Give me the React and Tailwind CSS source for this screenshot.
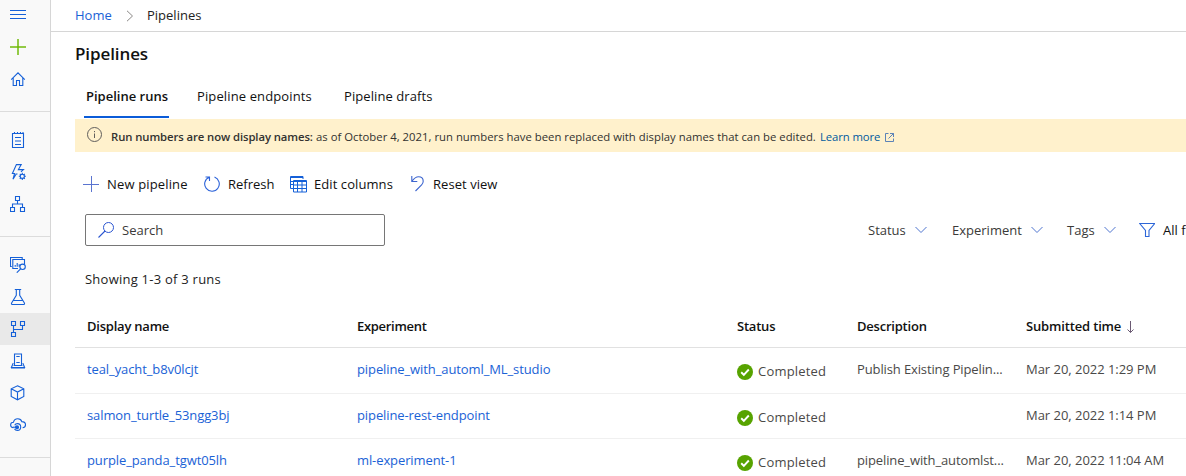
import React from "react";

function Icon({ children, size = 16, className = "" }) {
  return (
    <svg
      width={size}
      height={size}
      viewBox={`0 0 ${size} ${size}`}
      fill="none"
      stroke="currentColor"
      strokeWidth="1.1"
      className={`shrink-0 ${className}`}
    >
      {children}
    </svg>
  );
}

const icons = {
  menu: <path d="M0 4.5h16M0 8.5h16M0 12.5h16" />,
  add: (
    <g stroke="#6bb700" strokeOpacity="0.72" strokeWidth="2">
      <path d="M0 8h16" />
      <path d="M8 0v16" />
    </g>
  ),
  home: <path d="M1.2 8.6 8 1.8l6.8 6.8M3.2 7v7.5h3.3v-5h3v5h3.3V7" />,
  notebook: <path d="M2.5 1.5h11v14h-11zM4.5 0v2M7.5 0v2M10.5 0v2M13 0v2M5 5.5h6M5 9h6M5 12.5h6" />,
  automl: (
    <>
      <path d="M7.5 10H6.2L3 15.2 4.6 9.5H2.4L6.4.6h4.8L8.4 5.6h5L11 7.8" />
      <circle cx="12.3" cy="12.3" r="2.1" />
      <path d="M12.3 8.8v1.4M12.3 14.4v1.5M8.8 12.3h1.4M14.4 12.3h1.5M9.8 9.8l1 1M13.8 13.8l1 1M9.8 14.8l1-1M13.8 10.8l1-1" />
    </>
  ),
  designer: <path d="M5.5.5h4v4h-4zM.5 11.5h4v4h-4zM10.5 11.5h4v4h-4zM7.5 4.5v3.5M2.5 11.5V8h10v3.5" />,
  datasets: (
    <>
      <path d="M1.8 9.5H.5v-9h11.7v1.8M8 11.5H2.8v-9h11.7V7" />
      <path d="M5.2 9.7V8M7.2 9.7V6M9.2 9.7V7.2" />
      <circle cx="12.6" cy="9.8" r="2.7" />
      <path d="m10.6 11.8-3.8 3.9" />
    </>
  ),
  flask: <path d="M4.8.5h6.4M6.3.5v5.8L1.6 14c-.4.8 0 1.5.8 1.5h11.2c.8 0 1.2-.7.8-1.5L9.7 6.3V.5M3.5 11.5h9" />,
  pipelines: <path d="M1.5.5h4v4h-4zM10.5.5h4v4h-4zM1.5 11.5h4v4h-4zM3.5 4.5v7M3.5 8.5h9v-4" />,
  models: <path d="M4.5 12V1h7v11M6.3 3.5h3.4M6.3 9.5h3.4M3.5 10.5H3l-1.6 4h13.2l-1.6-4h-.5M1 15h14M3.6 12.5h8.8" />,
  endpoints: <path d="m7.5.8 6.3 3v7.7l-6.3 3.3-6.3-3.3V3.8zM1.2 3.8l6.3 3.3 6.3-3.3M7.5 7.1v7.7" />,
  compute: (
    <>
      <path d="M3.5 10.8C1.7 10.6.6 9.4.6 8c0-1.700 1.300-2.800 2.900-2.800C3.900 3.100 5.600 1.700 7.800 1.700c2 0 3.500 1.200 4 2.900 2.300 0 3.700 1.300 3.700 3.100 0 1.600-1.200 2.900-2.900 3" />
      <path d="M4.700 8.300C5.300 7 6.200 6.600 7.400 6.600c2 0 3.300 1.400 3.300 3.300 0 2-1.500 3.500-3.400 3.500-1.200 0-2.200-.5-2.800-1.500" />
      <circle cx="7" cy="10.200" r="1.500" fill="currentColor" />
      <path d="M3 10.200h4" />
    </>
  ),
};

function NavItem({ name, selected }) {
  return (
    <div className={`flex h-8 items-center pl-[10px] ${selected ? "bg-[#e9e9e9]" : ""}`}>
      <Icon>{icons[name]}</Icon>
    </div>
  );
}

function Sidebar() {
  return (
    <nav className="flex w-[51px] shrink-0 flex-col border-r border-[#d6d6d6] bg-[#f9f9f9] text-[#1560d8]">
      <div className="border-b border-[#dcdcdc] pb-4">
        <div className="mb-[3px] flex h-7 items-center pl-[10px]">
          <Icon>{icons.menu}</Icon>
        </div>
        <NavItem name="add" />
        <NavItem name="home" />
      </div>
      <div className="border-b border-[#dcdcdc] pt-3 pb-4">
        <NavItem name="notebook" />
        <NavItem name="automl" />
        <NavItem name="designer" />
      </div>
      <div className="border-b border-[#dcdcdc] pt-3 pb-4">
        <NavItem name="datasets" />
        <NavItem name="flask" />
        <NavItem name="pipelines" selected />
        <NavItem name="models" />
        <NavItem name="endpoints" />
        <NavItem name="compute" />
      </div>
    </nav>
  );
}

function Chevron() {
  return (
    <svg width="12" height="8" viewBox="0 0 12 8" fill="none" stroke="#4f74cf" strokeWidth="1" className="shrink-0">
      <path d="m.5 1 5.500 5.500L11.500 1" />
    </svg>
  );
}

function Banner() {
  return (
    <div className="ml-6 flex h-[33px] shrink-0 items-center bg-[#fff1cc] pl-3 text-[11.3px] text-[#323130]">
      <Icon className="-mt-[2px] mr-[8px] text-[#605e5c]">
        <circle cx="7.500" cy="7.500" r="7" strokeWidth="1" />
        <path d="M7.500 6.500v4.500M7.500 4v1.200" strokeWidth="1" />
      </Icon>
      <span className="w-[205px] pt-[3px] font-semibold tracking-[-0.08px]">Run numbers are now display names:</span>
      <span className="w-[504px] pt-[3px] tracking-[0.02px]">
        as of October 4, 2021, run numbers have been replaced with display names that can be edited.
      </span>
      <span className="w-[65px] pt-[3px] tracking-[-0.1px] text-[#005a9e]">Learn more</span>
      <svg width="9" height="9" viewBox="0 0 9 9" fill="none" stroke="#4a76b4" className="mt-[3px] shrink-0">
        <path d="M3.500.5h-3v8h8v-3M5 .5h3.500V4M8.500.5l-5 5" strokeWidth=".9" />
      </svg>
    </div>
  );
}

function Toolbar() {
  return (
    <div className="mt-4 flex h-8 shrink-0 items-center pl-8 text-[13px] text-[#111]">
      <Icon className="mr-2 text-[#5a74d0]">
        <path d="M0 8.500h16M8.500 0v16" strokeWidth="1" />
      </Icon>
      <span className="w-[97px] pt-[2px] tracking-[0.15px]">New pipeline</span>
      <Icon className="mr-2 text-[#2b62d9]">
        <path d="M5.200 1.200A7.300 7.300 0 1 0 10.500 1.100M1.500 1h4v4" />
      </Icon>
      <span className="w-[62px] pt-[2px]">Refresh</span>
      <Icon size={17} className="mr-[7px] text-[#1560d8]">
        <path
          d="M3 12.500H.5V.5h12.500v2.500M0 1.500h13M.5 5.500H3M.5 8.500H3M3.500 4.500h13v11.500h-13zM3.500 5.500h13M3.500 9h13M3.500 12.500h13M7.500 6v10M12 6v10"
          strokeWidth="1"
        />
      </Icon>
      <span className="w-[97px] pt-[2px] tracking-[0.08px]">Edit columns</span>
      <Icon className="mr-[6px] text-[#3c65cf]">
        <path d="M.8 0v5.500h5.500M.8 5.500C3 2.500 5 .8 7.500.8c3 0 4.700 2 4.700 4.500 0 1.500-.6 2.600-1.600 3.600L4.500 15" />
      </Icon>
      <span className="pt-[2px] tracking-[0.05px]">Reset view</span>
    </div>
  );
}

function Filters() {
  return (
    <div className="mt-[14px] flex h-8 shrink-0 items-center pl-[34px] text-[13px] text-[#3b3a39]">
      <div className="flex h-8 w-[300px] shrink-0 items-center rounded-[2px] border border-[#767676] pl-3">
        <Icon className="mr-2 text-[#2b55d0]">
          <circle cx="10.500" cy="5.500" r="5" strokeWidth="1" />
          <path d="M7 9 .5 15.500" />
        </Icon>
        <span className="pt-[2px]">Search</span>
      </div>
      <div className="ml-[483px] flex w-[84px] shrink-0 items-center">
        <span className="w-[47px] pt-[2px]">Status</span>
        <Chevron />
      </div>
      <div className="flex w-[115px] shrink-0 items-center">
        <span className="w-[79px] pt-[2px]">Experiment</span>
        <Chevron />
      </div>
      <div className="flex w-[72px] shrink-0 items-center">
        <span className="w-[37px] pt-[2px]">Tags</span>
        <Chevron />
      </div>
      <Icon className="mr-2 text-[#2d66d8]">
        <path d="M.7 1.500h15L10 8.500v6H6.500v-6z" />
      </Icon>
      <span className="shrink-0 pt-[2px] whitespace-nowrap text-[#111]">All filters</span>
    </div>
  );
}

const cols = "grid grid-cols-[270px_380px_120px_169px_160px] pl-3";

const rows = [
  { name: "teal_yacht_b8v0lcjt", exp: "pipeline_with_automl_ML_studio", desc: "Publish Existing Pipelin...", time: "Mar 20, 2022 1:29 PM", box: "h-[46px] pb-[2px]" },
  { name: "salmon_turtle_53ngg3bj", exp: "pipeline-rest-endpoint", desc: "", time: "Mar 20, 2022 1:14 PM", box: "h-[45px]" },
  { name: "purple_panda_tgwt05lh", exp: "ml-experiment-1", desc: "pipeline_with_automlst...", time: "Mar 20, 2022 11:04 AM", box: "h-[46px] pb-[2px]" },
];

function RunsTable() {
  return (
    <div className="ml-6 shrink-0 text-[13px]">
      <div className={`${cols} h-[43px] items-center border-b border-[#e1e1e1] pt-[2px] font-semibold tracking-[-0.22px] text-[#111]`}>
        <span>Display name</span>
        <span className="tracking-[-0.3px]">Experiment</span>
        <span>Status</span>
        <span>Description</span>
        <span className="flex items-center">
          <span className="w-[101px] tracking-[-0.16px]">Submitted time</span>
          <svg width="8" height="12" viewBox="0 0 8 12" fill="none" stroke="#6b5a73" className="shrink-0">
            <path d="M3.500 0v11.500M.5 8.500l3 3 3-3" />
          </svg>
        </span>
      </div>
      {rows.map((r) => (
        <div key={r.name} className={`${cols} ${r.box} items-center border-b border-[#f0f0f0] text-[#4a4948]`}>
          <span className="tracking-[-0.1px] text-[#1a62d6]">{r.name}</span>
          <span className="tracking-[-0.1px] text-[#1a62d6]">{r.exp}</span>
          <span className="flex items-center pt-[4px] tracking-[0.2px]">
            <svg width="16" height="16" viewBox="0 0 16 16" fill="none" className="mr-[5px] shrink-0">
              <circle cx="8" cy="8" r="8" fill="#57a300" />
              <path d="m4.200 8.300 2.600 2.500 5-5.300" stroke="#fff" strokeWidth="1.900" />
            </svg>
            Completed
          </span>
          <span className="tracking-[-0.12px]">{r.desc}</span>
          <span className="tracking-[-0.03px]">{r.time}</span>
        </div>
      ))}
    </div>
  );
}

export default function App() {
  return (
    <div className="flex h-[476px] w-[1186px] overflow-hidden whitespace-nowrap bg-white font-['Open_Sans','Noto_Sans',sans-serif] text-[13px]">
      <Sidebar />
      <main className="flex w-[1135px] shrink-0 flex-col overflow-hidden">
        <div className="flex h-8 shrink-0 items-center border-b border-[#d6d6d6] pl-6">
          <span className="w-[51px] text-[#1a62d6]">Home</span>
          <svg width="8" height="12" viewBox="0 0 8 12" fill="none" stroke="#8a8886" className="mr-[13px] shrink-0">
            <path d="m1 .8 5.500 5.200L1 11.200" />
          </svg>
          <span className="text-[#222]">Pipelines</span>
        </div>
        <h1 className="mt-[10px] h-6 shrink-0 pl-6 text-[17px] leading-6 font-semibold tracking-[-0.1px] text-[#111]">Pipelines</h1>
        <div className="mt-[10px] mb-px flex h-[42px] shrink-0 pl-[33px] text-[#111]">
          <span className="mr-[28px] flex w-[85px] items-center border-b-2 border-[#0b5cd8] pt-[2px] pl-[2px] font-semibold">
            Pipeline runs
          </span>
          <span className="flex w-[147px] items-center tracking-[0.12px]">Pipeline endpoints</span>
          <span className="flex items-center tracking-[0.08px]">Pipeline drafts</span>
        </div>
        <Banner />
        <Toolbar />
        <Filters />
        <div className="mt-6 flex h-5 shrink-0 items-center pl-[34px] tracking-[0.24px] text-[#222]">
          Showing 1-3 of 3 runs
        </div>
        <div className="h-[15px] shrink-0" />
        <RunsTable />
      </main>
    </div>
  );
}
